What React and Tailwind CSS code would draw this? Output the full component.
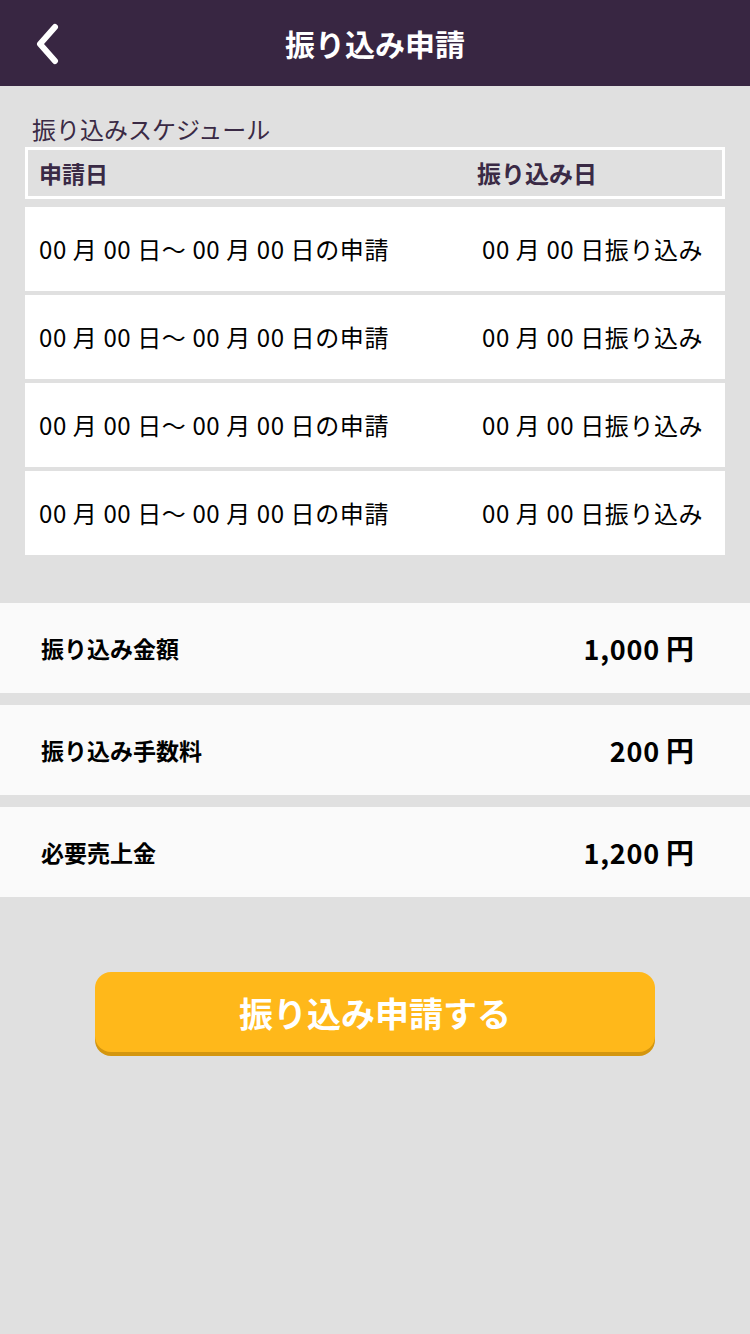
import React from 'react';

const schedule = [
  { apply: '00 月 00 日〜 00 月 00 日の申請', pay: '00 月 00 日振り込み' },
  { apply: '00 月 00 日〜 00 月 00 日の申請', pay: '00 月 00 日振り込み' },
  { apply: '00 月 00 日〜 00 月 00 日の申請', pay: '00 月 00 日振り込み' },
  { apply: '00 月 00 日〜 00 月 00 日の申請', pay: '00 月 00 日振り込み' },
];

const summary = [
  { label: '振り込み金額', value: '1,000' },
  { label: '振り込み手数料', value: '200' },
  { label: '必要売上金', value: '1,200' },
];

export default function App() {
  return (
    <div
      className="w-[750px] min-h-[1334px] bg-[#e0e0e0]"
      style={{ fontFamily: '"Noto Sans CJK JP", "Noto Sans", sans-serif' }}
    >
      {/* header */}
      <div className="relative h-[86px] bg-[#382642] flex items-center justify-center">
        <button className="absolute left-[31px] top-[23px] w-[32px] h-[42px] flex items-center justify-center">
          <svg width="28" height="42" viewBox="0 0 28 42" fill="none">
            <path d="M22 4 L7 21 L22 38" stroke="white" strokeWidth="6" strokeLinecap="round" strokeLinejoin="round" />
          </svg>
        </button>
        <h1 className="text-[30px] font-bold text-white leading-none">振り込み申請</h1>
      </div>

      {/* schedule */}
      <div className="px-[25px] pt-[26px]">
        <p className="pl-[7px] text-[24px] leading-[34px] text-[#3a2a45]">振り込みスケジュール</p>
        <div className="mt-[1px] h-[52px] border-[3px] border-white flex items-center text-[23px] font-bold text-[#3a2a45]">
          <span className="pl-[11px] w-[449px]">申請日</span>
          <span className="text-[24px]">振り込み日</span>
        </div>
        <div className="mt-[8px] flex flex-col gap-[4px]">
          {schedule.map((row, i) => (
            <div key={i} className="h-[84px] bg-white flex items-center text-[24px] tracking-[0.6px] text-black">
              <span className="pl-[14px] w-[457px]">{row.apply}</span>
              <span>{row.pay}</span>
            </div>
          ))}
        </div>
      </div>

      {/* summary */}
      <div className="mt-[48px] flex flex-col gap-[12px]">
        {summary.map((item, i) => (
          <div key={i} className="h-[90px] bg-[#fafafa] flex items-center justify-between pl-[41px] pr-[56px]">
            <span className="text-[23px] font-bold text-black">{item.label}</span>
            <span className="font-bold text-black flex items-baseline gap-[6px]">
              <span className="text-[27px] tracking-[0.8px]">{item.value}</span>
              <span className="text-[28px]">円</span>
            </span>
          </div>
        ))}
      </div>

      {/* submit */}
      <div className="mt-[75px] flex justify-center">
        <button className="w-[560px] h-[80px] rounded-[16px] bg-[#ffb81a] shadow-[0_4px_0_#d4960f] text-[34px] font-bold text-white mb-[4px]">
          振り込み申請する
        </button>
      </div>
    </div>
  );
}
